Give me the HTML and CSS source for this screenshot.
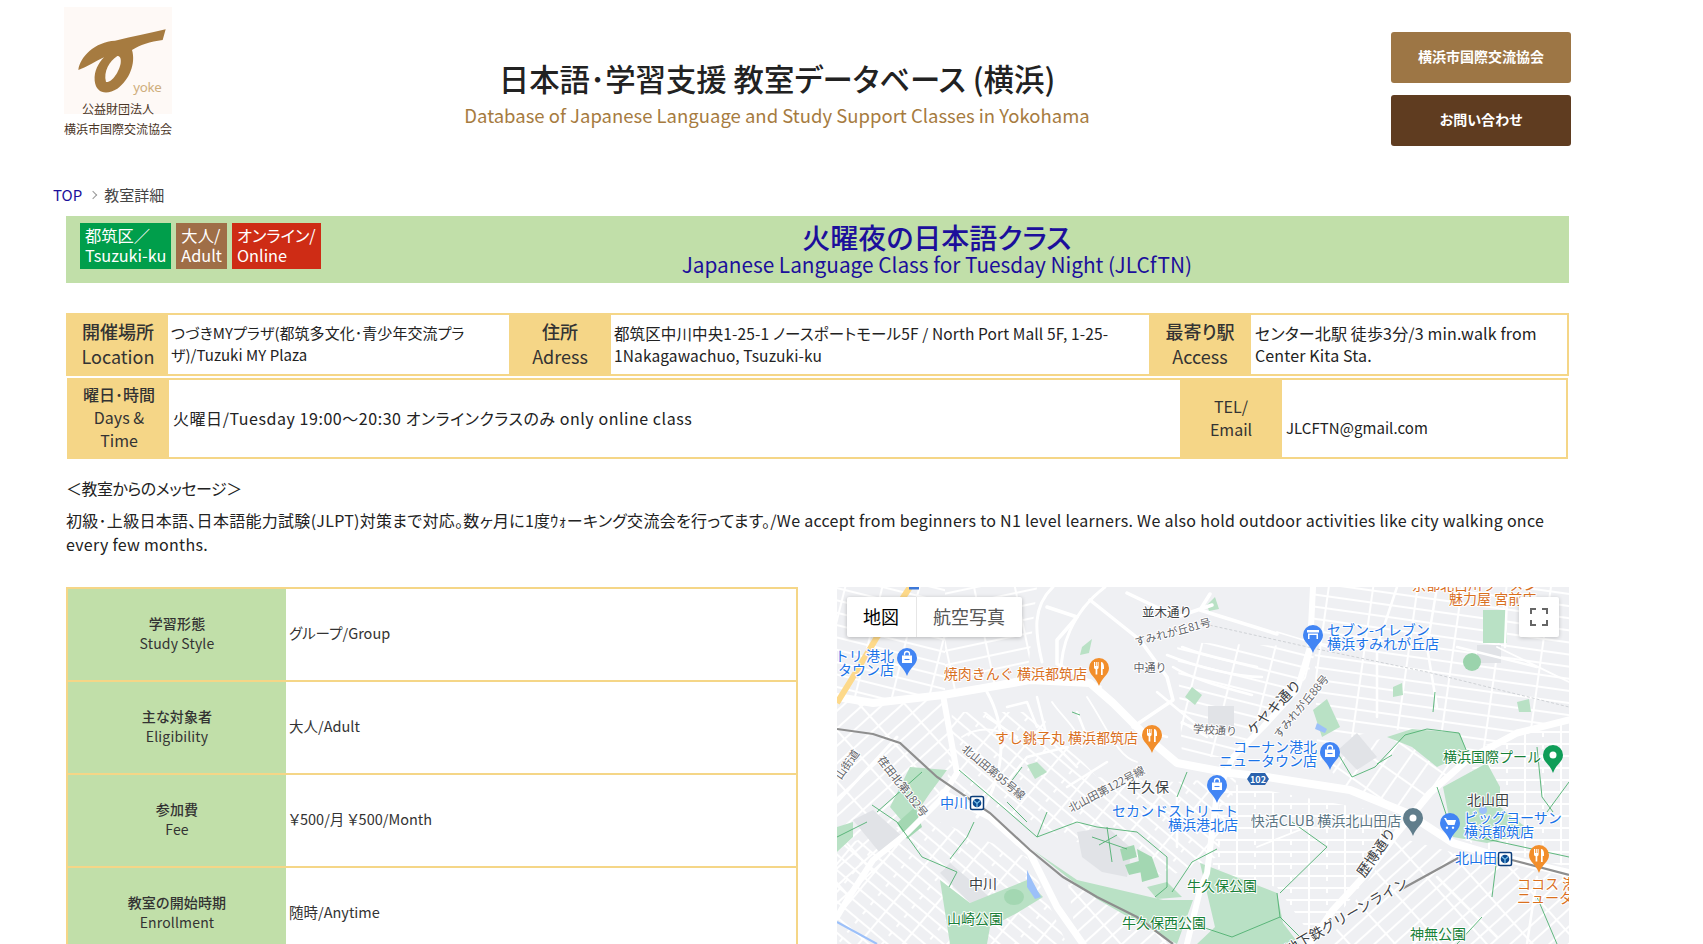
FILE: index.html
```html
<!DOCTYPE html>
<html lang="ja">
<head>
<meta charset="utf-8">
<title>火曜夜の日本語クラス</title>
<link rel="stylesheet" href="styles.css">
</head>
<body>
<header class="site-header">
  <div class="logo">
    <svg class="logo-mark" viewBox="192 21 324 321" width="108" height="107">
      <rect x="192" y="21" width="324" height="321" fill="#fef9f6"/>
      <path fill="#a67b40" fill-rule="evenodd" d="M497 88 L488 120 C450 125 420 135 396 150 C408 190 388 240 352 266 C320 286 288 280 284 242 C282 212 295 190 312 172 C285 185 262 200 235 210 C240 170 285 125 345 122 C400 108 450 100 497 88 Z M352 168 C328 183 310 215 318 246 C335 250 358 215 362 190 C364 175 360 168 352 168 Z"/>
      <text x="400" y="277" class="logo-yoke">yoke</text>
    </svg>
    <p class="logo-text">公益財団法人<br>横浜市国際交流協会</p>
  </div>
  <div class="site-title">
    <h1>日本語･学習支援 教室データベース (横浜)</h1>
    <p>Database of Japanese Language and Study Support Classes in Yokohama</p>
  </div>
  <nav class="header-buttons">
    <a class="btn btn-light">横浜市国際交流協会</a>
    <a class="btn btn-dark">お問い合わせ</a>
  </nav>
</header>

<main class="content">
  <div class="breadcrumb"><a>TOP</a><span class="crumb-sep"></span><span>教室詳細</span></div>

  <section class="title-bar">
    <div class="badges">
      <span class="badge badge-green">都筑区／<br>Tsuzuki-ku</span>
      <span class="badge badge-brown">大人/<br>Adult</span>
      <span class="badge badge-red">オンライン/<br>Online</span>
    </div>
    <div class="class-title">
      <h2>火曜夜の日本語クラス</h2>
      <p>Japanese Language Class for Tuesday Night (JLCfTN)</p>
    </div>
  </section>

  <section class="info-row info-row-a">
    <div class="info-label"><b>開催場所</b>Location</div>
    <div class="info-value">つづきMYプラザ(都筑多文化･青少年交流プラザ)/Tuzuki MY Plaza</div>
    <div class="info-label"><b>住所</b>Adress</div>
    <div class="info-value info-value-wide">都筑区中川中央1-25-1 ノースポートモール5F / North Port Mall 5F, 1-25-1Nakagawachuo, Tsuzuki-ku</div>
    <div class="info-label"><b>最寄り駅</b>Access</div>
    <div class="info-value info-value-lg">センター北駅 徒歩3分/3 min.walk from Center Kita Sta.</div>
  </section>
  <section class="info-row info-row-b">
    <div class="info-label info-label-sm"><b>曜日･時間</b>Days &amp;<br>Time</div>
    <div class="info-value info-value-lg info-value-spaced">火曜日/Tuesday 19:00～20:30 オンラインクラスのみ only online class</div>
    <div class="info-label info-label-sm">TEL/<br>Email</div>
    <div class="info-value info-value-mail">JLCFTN@gmail.com</div>
  </section>

  <p class="msg-head">＜教室からのメッセージ＞</p>
  <p class="msg-body">初級･上級日本語、日本語能力試験(JLPT)対策まで対応。数ヶ月に1度ｳｫーキング交流会を行ってます。/We accept from beginners to N1 level learners. We also hold outdoor activities like city walking once every few months.</p>

  <section class="lower">
    <div class="detail-table">
      <div class="detail-row"><div class="detail-label"><b>学習形態</b>Study Style</div><div class="detail-value">グループ/Group</div></div>
      <div class="detail-row"><div class="detail-label"><b>主な対象者</b>Eligibility</div><div class="detail-value">大人/Adult</div></div>
      <div class="detail-row"><div class="detail-label"><b>参加費</b>Fee</div><div class="detail-value">￥500/月 ￥500/Month</div></div>
      <div class="detail-row"><div class="detail-label"><b>教室の開始時期</b>Enrollment</div><div class="detail-value">随時/Anytime</div></div>
    </div>

    <div class="map">
      <svg class="map-svg" viewBox="0 0 732 357" width="732" height="357">
        <defs>
          <pattern id="st0" width="36" height="12" patternUnits="userSpaceOnUse"><path d="M0 1H36M4 0V12M22 0V6" class="s"/></pattern>
          <pattern id="st1" width="36" height="12" patternUnits="userSpaceOnUse" patternTransform="rotate(14)"><path d="M0 1H36M8 0V12" class="s"/></pattern>
          <pattern id="st2" width="34" height="12" patternUnits="userSpaceOnUse" patternTransform="rotate(40)"><path d="M0 1H34M8 0V12M26 0V6" class="s"/></pattern>
          <pattern id="st3" width="34" height="13" patternUnits="userSpaceOnUse" patternTransform="rotate(-42)"><path d="M0 1H34M6 0V13" class="s"/></pattern>
          <pattern id="st4" width="40" height="14" patternUnits="userSpaceOnUse" patternTransform="rotate(-12)"><path d="M0 1H40M14 0V14" class="s"/></pattern>
          <pattern id="st5" width="18" height="28" patternUnits="userSpaceOnUse" patternTransform="rotate(35)"><path d="M0 1H18M9 0V28" class="s"/></pattern>
          <pattern id="st6" width="44" height="12" patternUnits="userSpaceOnUse" patternTransform="rotate(8)"><path d="M0 1H44M3 0V12" class="s"/></pattern>

          <g id="pin"><path d="M0-10a10 10 0 0 1 10 10c0 7-7 9-10 18c-3-9-10-11-10-18a10 10 0 0 1 10-10z"/></g>
          <g id="ic-bag"><path d="M-5-2.500h10v7.500h-10z" fill="#fff"/><path d="M-2.500-2.500v-1.500a2.500 2.500 0 0 1 5 0v1.500" fill="none" stroke="#fff" stroke-width="1.300"/><path d="M-2.500 1.500h5" stroke="#4285f4" stroke-width="1.100"/></g>
          <g id="ic-food" fill="#fff"><path d="M-5-6h1v4h.8v-4h1v4h.8v-4h1v5.500c0 1-.8 1.500-1.300 1.700v5.300h-1.700v-5.300c-.6-.2-1.600-.7-1.600-1.700z"/><path d="M2-6c2 0 3 2 3 5v2h-1.300v6h-1.700z"/></g>
          <g id="ic-stn"><rect x="-6.500" y="-6.500" width="13" height="13" rx="1.500" fill="#fff" stroke="#0b3d7a" stroke-width="1.500"/><circle r="4.300" fill="#0b4a8f"/><path d="M-3-2.200L0 .5L3-2.200M0 .5V4" stroke="#7cc4ee" stroke-width="1.200" fill="none"/></g>
        </defs>

        <rect width="732" height="357" fill="#eff0f3"/>

        <!-- street blocks -->
        <polygon points="0,0 108,0 108,112 0,112" fill="url(#st1)"/>
        <polygon points="108,0 200,0 190,92 108,106" fill="url(#st4)"/>
        <polygon points="340,55 480,60 470,90 400,170 345,170" fill="url(#st1)"/>
        <polygon points="476,0 732,0 732,132 640,165 550,140 480,160" fill="url(#st6)"/>
        <polygon points="0,112 104,112 118,190 60,260 0,330" fill="url(#st3)"/>
        <polygon points="0,260 90,230 190,270 230,357 0,357" fill="url(#st2)"/>
        <polygon points="115,125 200,125 260,190 340,195 400,190 380,270 330,290 240,255 190,235 110,200" fill="url(#st2)"/>
        <polygon points="385,195 570,230 530,290 480,357 440,300 375,285" fill="url(#st0)"/>
        <polygon points="480,170 550,150 630,170 570,225 510,200" fill="url(#st5)"/>
        <polygon points="560,250 650,275 732,290 732,357 490,357" fill="url(#st3)"/>
        <polygon points="640,160 732,135 732,280 650,262 620,250" fill="url(#st0)"/>
        <polygon points="230,290 300,330 340,357 240,357" fill="url(#st3)"/>

        <!-- grey blocks -->
        <g fill="#e1e3e7">
          <polygon points="16,233 36,223 66,250 43,266"/>
          <polygon points="103,286 113,276 156,313 133,316"/>
          <polygon points="501,163 520,146 540,170 520,183"/>
          <rect x="413" y="306" width="27" height="27"/>
          <rect x="371" y="119" width="26" height="24"/>
          <polygon points="240,245 270,240 295,262 290,290 265,285 245,270"/>
          <rect x="640" y="58" width="24" height="18"/>
        </g>

        <!-- parks -->
        <g fill="#b9e1c5">
          <polygon points="103,293 133,316 190,293 206,310 180,326 153,340 150,357 113,357"/>
          <polygon points="196,263 240,293 326,313 356,313 340,357 300,335 260,312 230,290"/>
          <polygon points="363,276 440,306 446,336 462,357 360,357 378,340"/>
          <polygon points="606,200 650,176 663,200 663,220 696,246 650,256 616,250"/>
          <rect x="646" y="23" width="24" height="33"/>
          <polygon points="550,150 575,142 623,146 630,166 600,180 575,160"/>
          <polygon points="73,180 110,183 93,206 70,240 53,220"/>
          <polygon points="476,123 490,112 503,140 485,150"/>
          <polygon points="0,265 0,240 16,235 16,250"/>
          <rect x="626" y="66" width="18" height="18" rx="9" fill="#9bd3ac"/>
          <ellipse cx="177" cy="310" rx="10" ry="8" fill="#a3d7b2"/>
          <polygon points="283,262 297,258 300,270 286,274" fill="#a3d7b2"/>
          <polygon points="288,278 302,274 305,285 292,288" fill="#a3d7b2"/>
          <polygon points="300,262 315,270 322,290 305,295" fill="#a3d7b2"/>
          <polygon points="60,236 78,220 85,240 70,252" fill="#a3d7b2"/>
          <polygon points="190,178 200,175 210,185 198,192"/>
          <polygon points="355,100 365,108 358,118 348,110"/>
          <polygon points="245,60 255,52 252,66 243,68"/>
          <polygon points="680,115 692,112 694,125 682,125"/>
          <polygon points="370,18 378,10 382,22 372,24"/>
          <polygon points="556,100 565,96 566,108 556,110"/>
          <polygon points="310,300 330,295 345,310 320,312"/>
        </g>

        <!-- water -->
        <g fill="#9cc0f9">
          <polygon points="190,283 196,295 204,310 198,312 190,300"/>
          <polygon points="480,136 490,142 488,146 478,142"/>
          <circle cx="646" cy="223" r="4"/>
        </g>
        <path d="M0 335L40 357" stroke="#9cc0f9" stroke-width="2" fill="none"/>

        <!-- roads -->
        <g fill="none" stroke="#fff" stroke-linecap="round" stroke-linejoin="round">
          <path stroke-width="8" d="M0 110L36 116L106 108L193 93L253 96L276 116L313 153L340 176L393 186L430 190L513 203L570 226L616 256L663 270L732 286"/>
          <path stroke-width="6" d="M106 108L120 186L103 213L70 246L36 273L10 313L0 330"/>
          <path stroke-width="7" d="M106 206L153 230L193 266L220 320L246 357"/>
          <path stroke-width="6" d="M476 0L473 60L460 103L426 140L396 170L380 206L370 286L363 303L350 357"/>
          <path stroke-width="7" d="M732 133L680 146L630 173L593 206L560 246L530 286L496 323L473 357"/>
          <path stroke-width="3" d="M216 0C195 20 198 45 205 75M268 0C235 25 222 60 224 95M0 215L60 150M150 105C170 140 170 190 140 230"/>
          <path stroke-width="3.500" d="M210 20L240 30L220 53L220 77L263 100M253 13L303 53L330 90L336 113L296 140M373 7L363 23L440 47M290 6L340 30L375 18"/>
          <path stroke-width="2.500" d="M345 60C370 70 400 75 420 80M330 68C360 80 400 90 425 90M336 80C355 92 385 100 415 108M320 105L350 130L375 150M296 140L330 150M345 135L370 150M240 125L250 150M200 110L210 150L240 180M150 130L180 150M170 120L190 115L200 140M230 160L190 170L170 195M300 180L300 200M270 175L230 200M340 210L340 260M310 215L350 235M620 60L700 80M670 10L668 60M600 290L660 350M700 290L690 357M560 0L540 60L540 130M600 0L590 60L600 120"/>
          <path stroke-width="1.800" d="M250 110C270 140 280 170 300 175M215 115C225 130 240 140 245 160M125 150C140 140 160 140 170 150M440 45L490 60M420 260L470 240M660 60L732 95"/>
        </g>
        <path d="M363 36L480 62L590 85L732 120" fill="none" stroke="#cfd2d6" stroke-width="1" stroke-dasharray="3 2"/>
        <path d="M0 116L16 90L40 50L73 0" fill="none" stroke="#fdd98a" stroke-width="6"/>
        <path d="M72 0L82 0" stroke="#3c78d8" stroke-width="5"/>

        <!-- rail -->
        <g fill="none" stroke="#8e8e8e" stroke-width="2.200">
          <path d="M0 142L36 147L63 156L100 190L153 226L193 263L226 290L260 310L300 330L336 357"/>
          <path d="M563 303L623 270M675 273L732 288"/>
        </g>

        <!-- footpaths -->
        <g fill="none" stroke="#4fb071" stroke-width=".9">
          <path d="M122 183L168 222L200 250L240 235L260 240L300 245L330 270L330 300L318 310M200 250L210 225M190 235L170 215M170 200L185 180"/>
          <path d="M35 218L60 235L85 270L120 285L112 300M85 185L40 225M137 235L130 250L113 272"/>
          <path d="M255 250L290 262M262 258L280 248M270 240L275 275"/>
          <path d="M350 185L340 210M335 305L355 275L380 262"/>
          <path d="M500 165L515 190L538 180L568 148L590 142L622 146L630 165M555 168L540 177"/>
          <path d="M440 306L443 330L470 357M443 306L490 260L455 235M365 340L395 350L443 330"/>
          <path d="M600 200L610 230M700 160L705 210L716 225M732 195L710 225"/>
          <path d="M596 125L598 105M640 250L732 270M660 270L655 310M700 310L720 357M645 330L620 357"/>
          <path d="M0 250L30 235M235 125L243 128"/>
        </g>

        <!-- pins -->
        <g fill="#4285f4">
          <g transform="translate(70 71)"><use href="#pin"/><use href="#ic-bag"/></g>
          <g transform="translate(380 198)"><use href="#pin"/><use href="#ic-bag"/></g>
          <g transform="translate(493 165)"><use href="#pin"/><use href="#ic-bag"/></g>
          <g transform="translate(476 48)"><use href="#pin"/><path d="M-6-5h12v2.500h-12zM-5-1.500h10v5.500h-1.500v-4h-7v4h-1.500z" fill="#fff"/></g>
          <g transform="translate(613 236)"><use href="#pin"/><path d="M-6-5h2l1 2h9l-1.500 5h-6.500zM-3 3.500a1.200 1.200 0 1 0 .01 0zM3 3.500a1.200 1.200 0 1 0 .01 0z" fill="#fff"/></g>
        </g>
        <g fill="#f28e2b">
          <g transform="translate(262 81)"><use href="#pin"/><use href="#ic-food"/></g>
          <g transform="translate(315 148)"><use href="#pin"/><use href="#ic-food"/></g>
          <g transform="translate(702 268)"><use href="#pin"/><use href="#ic-food"/></g>
        </g>
        <g transform="translate(716 168)" fill="#0f9d58"><use href="#pin"/><circle r="3.500" fill="#fff"/></g>
        <g transform="translate(576 231)" fill="#607d8b"><use href="#pin"/><circle r="3.500" fill="#fff"/></g>
        <path d="M410 192l4-6h14l4 6l-4 6h-14z" fill="#2b62ad"/>
        <text x="421" y="195.500" class="m road-no">102</text>
        <use href="#ic-stn" transform="translate(140 216)"/>
        <use href="#ic-stn" transform="translate(668 272)"/>

        <!-- labels -->
        <g class="m blue">
          <text x="57" y="74" text-anchor="end">トリ 港北</text>
          <text x="57" y="88" text-anchor="end">タウン店</text>
          <text x="490" y="48">セブン-イレブン</text>
          <text x="490" y="62">横浜すみれが丘店</text>
          <text x="480" y="165" text-anchor="end">コーナン港北</text>
          <text x="480" y="179" text-anchor="end">ニュータウン店</text>
          <text x="401" y="229" text-anchor="end">セカンドストリート</text>
          <text x="401" y="243" text-anchor="end">横浜港北店</text>
          <text x="627" y="236">ビッグヨーサン</text>
          <text x="627" y="250">横浜都筑店</text>
          <text x="131" y="221" text-anchor="end">中川</text>
          <text x="660" y="276" text-anchor="end">北山田</text>
        </g>
        <g class="m orange">
          <text x="250" y="92" text-anchor="end">焼肉きんぐ 横浜都筑店</text>
          <text x="301" y="156" text-anchor="end">すし銚子丸 横浜都筑店</text>
          <text x="575" y="3">京都北白川ラーメン</text>
          <text x="612" y="17">魅力屋 宮前店</text>
          <text x="680" y="302">ココス 港北</text>
          <text x="680" y="316">ニュータウン店</text>
        </g>
        <g class="m green">
          <text x="138" y="337" text-anchor="middle">山崎公園</text>
          <text x="385" y="304" text-anchor="middle">牛久保公園</text>
          <text x="327" y="341" text-anchor="middle">牛久保西公園</text>
          <text x="655" y="175" text-anchor="middle">横浜国際プール</text>
          <text x="601" y="352" text-anchor="middle">神無公園</text>
        </g>
        <text x="489" y="239" class="m slate" text-anchor="middle">快活CLUB 横浜北山田店</text>
        <g class="m dark" text-anchor="middle">
          <text x="330" y="30" class="sm12">並木通り</text>
          <text x="311" y="205">牛久保</text>
          <text x="146" y="302">中川</text>
          <text x="651" y="218">北山田</text>
          <text transform="translate(438 121) rotate(-46)" y="4">ケヤキ通り</text>
          <text transform="translate(540 266) rotate(-55)" y="4">歴博通り</text>
          <text transform="translate(510 330) rotate(-30)" y="4">地下鉄グリーンライン</text>
        </g>
        <g class="m grey" text-anchor="middle">
          <text transform="translate(336 46) rotate(-15)" y="3">すみれが丘81号</text>
          <text x="313" y="85">中通り</text>
          <text transform="translate(378 144) rotate(4)" y="3">学校通り</text>
          <text transform="translate(156 186) rotate(40)" y="3">北山田第95号線</text>
          <text transform="translate(65 200) rotate(52)" y="3">荏田北第182号</text>
          <text transform="translate(11 178) rotate(-55)" y="3">山街道</text>
          <text transform="translate(270 203) rotate(-28)" y="3">北山田第122号線</text>
          <text transform="translate(465 120) rotate(-50)" y="3">すみれが丘88号</text>
        </g>
      </svg>

      <div class="map-type">
        <span class="map-type-item is-active">地図</span>
        <span class="map-type-item">航空写真</span>
      </div>
      <div class="map-full">
        <svg viewBox="0 0 18 18" width="18" height="18"><path d="M1 6V1h5M12 1h5v5M17 12v5h-5M6 17H1v-5" fill="none" stroke="#666" stroke-width="2"/></svg>
      </div>
    </div>
  </section>
</main>
</body>
</html>
```
FILE: styles.css
```css
html, body {
  margin: 0;
  padding: 0;
  height: 944px;
  overflow: hidden;
  background: #fff;
}
body {
  font-family: "Noto Sans CJK JP", "Noto Sans", sans-serif;
  font-feature-settings: "palt";
  color: #222;
}
h1, h2, p { margin: 0; font-weight: 400; }
b { display: block; font-weight: 500; }

/* header */
.site-header {
  display: flex;
  height: 183px;
  padding-left: 64px;
}
.logo { width: 108px; padding-top: 7px; }
.logo-mark { display: block; }
.logo-yoke { font: 400 40px "Noto Sans", sans-serif; fill: #cfae7c; letter-spacing: -1px; }
.logo-text {
  margin-top: -15px;
  position: relative;
  text-align: center;
  font-size: 12px;
  line-height: 20px;
  color: #4a3526;
  white-space: nowrap;
}
.site-title { width: 1210px; padding-top: 58px; text-align: center; }
.site-title h1 { font-size: 30.400px; line-height: 40px; font-weight: 500; color: #222; }
.site-title p { font-size: 18.500px; line-height: 34px; color: #a67b40; }
.header-buttons {
  width: 180px;
  margin-left: 9px;
  padding-top: 32px;
  display: flex;
  flex-direction: column;
  gap: 12px;
}
.btn {
  height: 51px;
  box-sizing: border-box;
  padding-bottom: 3px;
  border-radius: 3px;
  display: flex;
  align-items: center;
  justify-content: center;
  color: #fff;
  font-size: 14px;
  font-weight: 700;
}
.btn-light { background: #9d7645; }
.btn-dark { background: #5f3c20; }

/* content */
.content { width: 1503px; margin-left: 66px; }
.breadcrumb {
  height: 24px;
  box-sizing: border-box;
  padding-bottom: 2px;
  margin: 0 0 9px -13px;
  display: flex;
  align-items: center;
  font-size: 15px;
  color: #444;
}
.breadcrumb a { color: #1c0f9b; }
.crumb-sep {
  width: 5px;
  height: 5px;
  margin: 2px 8px 0 8px;
  border-top: 1px solid #999;
  border-right: 1px solid #999;
  transform: rotate(45deg);
}

.title-bar {
  height: 67px;
  box-sizing: border-box;
  padding: 7px 16px 0 14px;
  display: flex;
  background: #c1dfa9;
}
.badges { display: flex; gap: 5px; height: 46px; }
.badge {
  padding: 2px 5px 4px;
  font-size: 16.300px;
  line-height: 20px;
  color: #fff;
  white-space: nowrap;
}
.badge-green { background: #009e4b; }
.badge-brown { background: #9f6e47; }
.badge-red { background: #ce2c15; }
.class-title { flex: 1; margin-top: -1px; text-align: center; color: #1c0f9b; }
.class-title h2 { font-size: 28px; line-height: 30px; font-weight: 500; }
.class-title p { font-size: 20.800px; line-height: 24px; }

.info-row {
  display: grid;
  box-sizing: border-box;
  border: 2px solid #f5d687;
}
.info-row-a {
  height: 63px;
  margin: 30px 0 2px;
  grid-template-columns: 100px 341px 102px 538px 102px 1fr;
}
.info-row-b {
  height: 81px;
  margin: 0 1px;
  grid-template-columns: 100px 1011px 102px 1fr;
}
.info-label {
  background: #f5d687;
  box-sizing: border-box;
  padding-bottom: 2px;
  display: flex;
  flex-direction: column;
  justify-content: center;
  text-align: center;
  font-size: 18px;
  line-height: 25px;
  color: #333;
}
.info-label-sm { font-size: 16px; line-height: 23px; }
.info-value {
  display: flex;
  align-items: center;
  box-sizing: border-box;
  padding: 0 3px 2px;
  font-size: 15px;
  line-height: 22px;
  letter-spacing: .05px;
  color: #222;
}
.info-value-wide { font-size: 15.500px; letter-spacing: .12px; }
.info-value-lg { font-size: 16px; padding: 0 4px 2px; letter-spacing: .15px; }
.info-value-spaced { letter-spacing: .55px; }
.info-value-mail { font-size: 15px; padding: 18px 4px 0; }

.msg-head { margin-top: 17px; font-size: 16px; line-height: 24px; letter-spacing: -.5px; }
.msg-body { margin-top: 8px; font-size: 16px; line-height: 24px; letter-spacing: .29px; }

/* lower */
.lower {
  margin-top: 31px;
  height: 357px;
  overflow: hidden;
  display: flex;
  gap: 39px;
}
.detail-table {
  width: 732px;
  box-sizing: border-box;
  border: 2px solid #f5d687;
  border-bottom: 0;
  height: 357px;
  overflow: hidden;
}
.detail-row {
  height: 93px;
  box-sizing: border-box;
  border-bottom: 2px solid #f5d687;
  display: flex;
}
.detail-label {
  width: 218px;
  box-sizing: border-box;
  padding-bottom: 3px;
  background: #c1dfa9;
  display: flex;
  flex-direction: column;
  justify-content: center;
  text-align: center;
  font-size: 14px;
  line-height: 20px;
  letter-spacing: .15px;
  color: #333;
}
.detail-value {
  flex: 1;
  display: flex;
  align-items: center;
  box-sizing: border-box;
  padding: 0 0 4px 3px;
  font-size: 14.500px;
  color: #333;
}

/* map */
.map { position: relative; width: 732px; height: 357px; overflow: hidden; }
.map-svg { display: block; }
.s { fill: none; stroke: #fff; stroke-width: 2; }
.m { font-family: "Noto Sans CJK JP", "Noto Sans", sans-serif; font-size: 14px; font-feature-settings: normal; }
.m text { paint-order: stroke; stroke: #fff; stroke-width: 2px; stroke-linejoin: round; }
.road-no { font-size: 9px; font-weight: 700; fill: #fff; text-anchor: middle; }
.blue { fill: #1a73e8; }
.orange { fill: #d9701f; }
.green { fill: #188038; }
.slate { fill: #5b7583; paint-order: stroke; stroke: #fff; stroke-width: 2px; }
.dark { fill: #3c4043; }
.grey { fill: #5f6368; font-size: 11px; }
.sm12 { font-size: 12.500px; }

.map-type {
  position: absolute;
  left: 10px;
  top: 10px;
  height: 40px;
  display: flex;
  background: #fff;
  border-radius: 2px;
  box-shadow: 0 1px 4px rgba(0, 0, 0, .25);
  font-size: 18px;
  font-family: "Noto Sans CJK JP", sans-serif;
  color: #565656;
}
.map-type-item {
  display: flex;
  align-items: center;
  padding: 0 17px 2px 16px;
  border-left: 1px solid #e6e6e6;
}
.map-type-item:first-child { border-left: 0; }
.map-type-item.is-active { color: #000; }
.map-full {
  position: absolute;
  right: 10px;
  top: 10px;
  width: 40px;
  height: 40px;
  display: flex;
  align-items: center;
  justify-content: center;
  background: #fff;
  border-radius: 2px;
  box-shadow: 0 1px 4px rgba(0, 0, 0, .2);
}
```
